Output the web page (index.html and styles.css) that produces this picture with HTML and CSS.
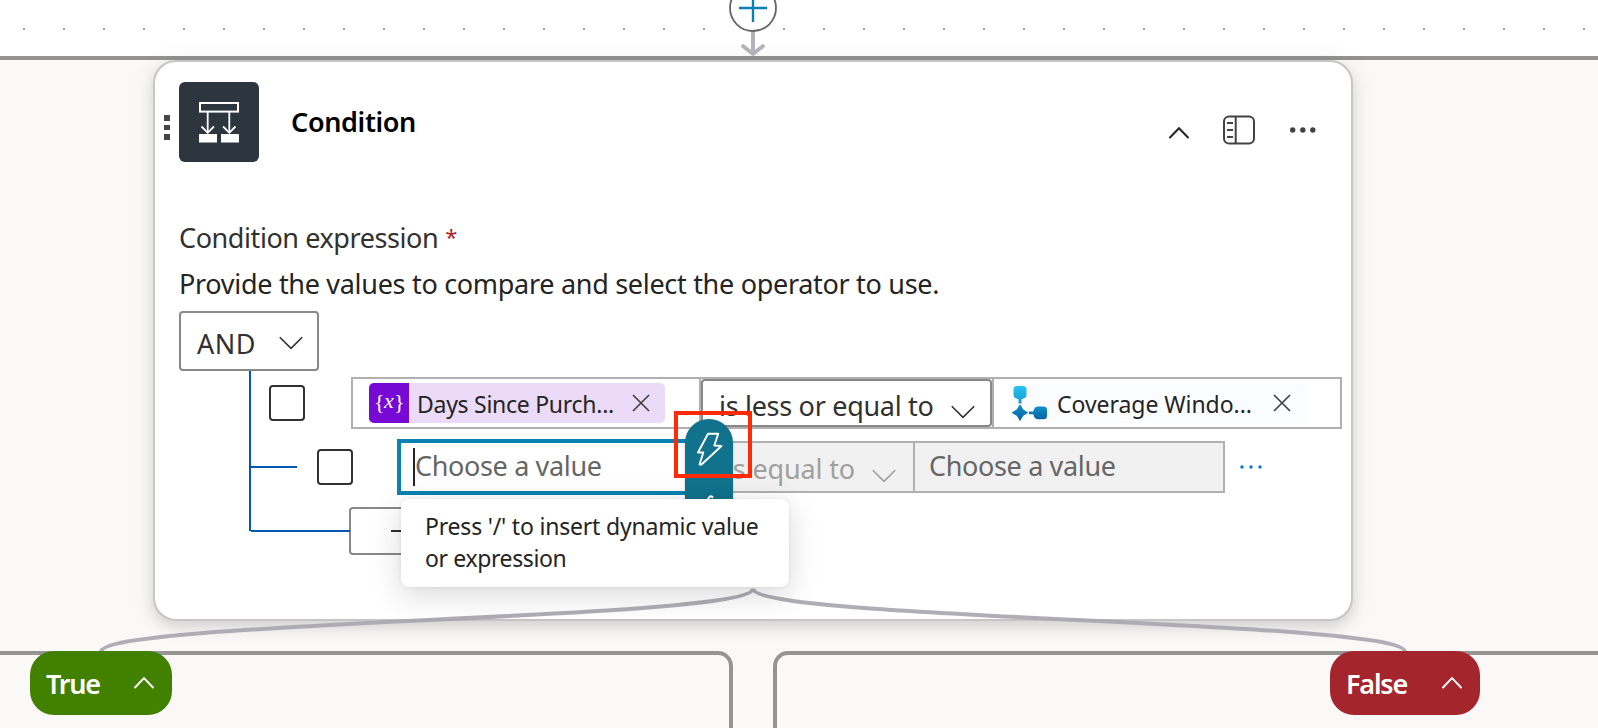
FILE: index.html
```html
<!DOCTYPE html>
<html lang="en">
<head>
<meta charset="utf-8">
<title>Condition</title>
<link rel="stylesheet" href="styles.css">
</head>
<body>
<main class="canvas">
  <section class="scope"></section>
  <section class="branch branch-left"></section>
  <section class="branch branch-right"></section>

  <article class="card">
    <header class="card-header">
      <span class="grip"><i></i><i></i><i></i></span>
      <svg class="op-icon" width="80" height="80" viewBox="0 0 80 80" fill="none" stroke="#fff">
        <rect width="80" height="80" rx="6" fill="#2d353f" stroke="none"/>
        <rect x="21" y="21" width="38" height="8.6" stroke-width="2"/>
        <path d="M28.7 30v21M50.3 30v21" stroke-width="1.8"/>
        <path d="M22.5 44.5l6.2 6.3 6.2-6.3M44.1 44.5l6.2 6.3 6.2-6.3" stroke-width="1.8"/>
        <path d="M20 52h18v8.500H20zM42 52h18v8.500H42z" fill="#fff" stroke="none"/>
      </svg>
      <h1 class="title">Condition</h1>
      <div class="tools">
        <svg width="22" height="14" viewBox="0 0 22 14" fill="none" stroke="#242424" stroke-width="2" stroke-linecap="round"><path d="M2 11.5l9-9.3 9 9.3"/></svg>
        <svg width="32" height="30" viewBox="0 0 32 30" fill="none" stroke="#424242" stroke-width="2"><rect x="1" y="1.5" width="30" height="27" rx="5"/><path d="M12.7 1.5v27M4 8h6M4 15h6M4 22h6"/></svg>
        <svg width="28" height="8" viewBox="0 0 28 8" fill="#424242"><circle cx="3.7" cy="4" r="2.7"/><circle cx="13.8" cy="4" r="2.7"/><circle cx="23.8" cy="4" r="2.7"/></svg>
      </div>
    </header>

    <div class="body">
      <p class="label"><span>Condition expression</span><b class="req">*</b></p>
      <p class="hint">Provide the values to compare and select the operator to use.</p>
      <button class="logic"><span class="t-and">AND</span>
        <svg width="24" height="14" viewBox="0 0 24 14" fill="none" stroke="#323130" stroke-width="1.6"><path d="M.8 1.3L12 12.4 23.2 1.3"/></svg>
      </button>

      <div class="tree">
        <div class="row row-one">
          <span class="check"></span>
          <div class="fields">
            <div class="operand first">
              <span class="token token-var">
                <svg width="40" height="40" viewBox="0 0 40 40"><path d="M5 0h35v40H5a5 5 0 0 1-5-5V5a5 5 0 0 1 5-5z" fill="#7609d4"/><g class="var-glyph"><text x="5" y="25.500">{</text><text x="20" y="25" text-anchor="middle" class="var-x">x</text><text x="25" y="25.500">}</text></g></svg>
                <span class="t-days">Days Since Purch...</span>
                <svg class="x" width="18" height="18" viewBox="0 0 18 18" stroke="#424242" stroke-width="1.7"><path d="M1 1l16 16M17 1L1 17"/></svg>
              </span>
            </div>
            <div class="operator"><span>is less or equal to</span>
              <svg width="24" height="14" viewBox="0 0 24 14" fill="none" stroke="#323130" stroke-width="1.6"><path d="M.8 1.3L12 12.4 23.2 1.3"/></svg>
            </div>
            <div class="operand last">
              <span class="token token-flow">
                <svg width="40" height="40" viewBox="0 0 40 40">
                  <defs>
                    <linearGradient id="g1" x1="0" y1="0" x2="0" y2="1"><stop offset="0" stop-color="#26c3ee"/><stop offset="1" stop-color="#159bd0"/></linearGradient>
                    <linearGradient id="g2" x1="0" y1="0" x2="0" y2="1"><stop offset="0" stop-color="#0f8fc6"/><stop offset="1" stop-color="#0664a4"/></linearGradient>
                  </defs>
                  <path d="M7 3h6q3.500 0 3.500 3.500v5q0 3-3 4l-2 .8V20.500H8.500v-4.200l-2-.8q-3-1-3-4v-5Q3.500 3 7 3z" fill="url(#g1)"/>
                  <path d="M10 22l2.800 4.700L17.500 29.700l-4.700 2.800L10 37.500l-2.800-5L2.300 29.700l4.900-3z" fill="url(#g2)" stroke="#0a78b4" stroke-width="1" stroke-linejoin="round"/>
                  <path d="M19 28.400h4.200l.8-2q1-3 4-3h5.500q3.500 0 3.500 3.500v5.800q0 3.500-3.500 3.500H28q-3 0-4-3l-.8-2H19z" fill="url(#g2)"/>
                </svg>
                <span class="t-cov">Coverage Windo...</span>
                <svg class="x" width="18" height="18" viewBox="0 0 18 18" stroke="#424242" stroke-width="1.7"><path d="M1 1l16 16M17 1L1 17"/></svg>
              </span>
            </div>
          </div>
        </div>

        <div class="row row-two">
          <span class="check"></span>
          <div class="focus"><i class="caret"></i><span>Choose a value</span></div>
          <div class="operator-off"><span>is equal to</span>
            <svg width="24" height="14" viewBox="0 0 24 14" fill="none" stroke="#a19f9d" stroke-width="1.6"><path d="M.8 1.3L12 12.4 23.2 1.3"/></svg>
          </div>
          <div class="value-off">Choose a value</div>
          <svg class="more" width="24" height="6" viewBox="0 0 24 6" fill="#0078d4"><circle cx="3" cy="3" r="1.700"/><circle cx="12" cy="3" r="1.700"/><circle cx="21" cy="3" r="1.700"/></svg>
        </div>

        <button class="add"><i class="dash"></i></button>
        <svg class="lines" width="104" height="162" viewBox="0 0 104 162" fill="none" stroke="#0059b0" stroke-width="2"><path d="M1 0v160M2 96h46M2 160h99"/></svg>
      </div>
    </div>
  </article>

  <div class="insert">
    <svg width="48" height="80" viewBox="0 0 48 80" fill="none" stroke="#fff" stroke-width="1.9" stroke-linejoin="round"><path d="M23 14.700h10.200l-3.900 11.800 7.200.5L16.500 45.500h-2l3.800-12H13z"/><path d="M22.500 82c.8-3.600 2-4.800 3.600-4.800q1.200 0 1.600 1.200" stroke-width="2"/><circle cx="27.300" cy="78.300" r="1" fill="#fff" stroke="none"/></svg>
  </div>
  <div class="tooltip">Press '/' to insert dynamic value<br><span class="tip-end">or expression</span></div>
  <div class="callout"></div>

  <svg class="edges" width="1598" height="728" viewBox="0 0 1598 728" fill="none">
    <path d="M753 588.500C753 620 101 620 101 652M753 588.500C753 620 1405 620 1405 652" stroke="#a8a7b0" stroke-opacity=".92" stroke-width="4"/>
    <path d="M753 31v22M743.200 46.200L753 54l9.800-7.800" stroke="#b3b2ba" stroke-width="4" stroke-linecap="round" stroke-linejoin="round"/>
    <circle cx="753" cy="8" r="23" fill="#fff" stroke="#666" stroke-width="1.800"/>
    <path d="M739 8h28M753-6v28" stroke="#0a82b0" stroke-width="2.400"/>
  </svg>

  <button class="branch-tag yes"><span>True</span>
    <svg width="22" height="14" viewBox="0 0 22 14" fill="none" stroke="#fff" stroke-width="1.900" stroke-linecap="round"><path d="M2 11.500l9-9.300 9 9.300"/></svg>
  </button>
  <button class="branch-tag no"><span>False</span>
    <svg width="22" height="14" viewBox="0 0 22 14" fill="none" stroke="#fff" stroke-width="1.900" stroke-linecap="round"><path d="M2 11.500l9-9.300 9 9.300"/></svg>
  </button>
</main>
</body>
</html>
```
FILE: styles.css
```css
* { box-sizing: border-box; }
body { margin: 0; font-family: "Noto Sans", "Open Sans", sans-serif; color: #323130; }
h1, p { margin: 0; font-weight: 400; }
button { font: inherit; color: inherit; padding: 0; letter-spacing: inherit; }
svg { display: block; flex: none; }

.canvas {
  position: relative;
  width: 1598px;
  height: 728px;
  overflow: hidden;
  background: conic-gradient(from 0deg at 2px 2px, transparent 270deg, #a0a0a0 0) 23px 28px / 40px 40px #fff;
}

/* group frames behind the nodes */
.scope {
  position: absolute;
  left: -20px; top: 56px;
  width: 1638px; height: 700px;
  border: 4px solid #939391;
  background: #faf9f8;
}
.branch {
  position: absolute;
  top: 651px;
  height: 120px;
  border: 4px solid #979593;
  background: #faf9f8;
  z-index: 2;
}
.branch-left { left: -20px; width: 753px; border-radius: 15px; }
.branch-right { left: 773px; width: 900px; border-radius: 15px; }

.card {
  position: absolute;
  left: 153px; top: 60px;
  width: 1200px; height: 561px;
  border: 2px solid #c6c6c6;
  border-radius: 23px;
  background: #fff;
  box-shadow: 0 6px 14px rgba(0,0,0,.13), 0 1px 30px rgba(0,0,0,.06);
}
.card-header { display: flex; padding: 20px 0 0 9px; height: 101px; }
.grip { display: flex; flex-direction: column; gap: 4px; width: 15px; padding-top: 33px; }
.grip i { width: 6px; height: 5.600px; background: #484644; }
.title { padding: 20px 0 0 32px; font-size: 27px; font-weight: 600; line-height: 40px; letter-spacing: -.35px; color: #000; flex: 1; }
.tools { display: flex; align-items: center; padding: 32px 34px 0 0; height: 64px; gap: 33px; }
.tools svg:first-child { margin-top: 6px; }
.tools svg:nth-child(2) { margin-right: 1px; }

.body { padding: 0 0 0 24px; font-size: 27px; letter-spacing: -.3px; }
.label { height: 102px; line-height: 38px; padding-top: 56px; display: flex; letter-spacing: -.42px; }
.req { color: #a4262c; font-weight: 400; font-size: 22px; line-height: 34px; padding-left: 7px; }
.hint { height: 48px; line-height: 38px; color: #242424; }
.logic {
  display: flex; align-items: center; justify-content: space-between;
  width: 140px; height: 60px; margin-top: -2px;
  padding: 4px 14px 0 16px;
  border: 2px solid #8a8886; border-radius: 4px; background: #fff;
}
.t-and { letter-spacing: .5px; }
.tree { position: relative; padding-top: 6px; }
.row { display: flex; align-items: center; }
.check { width: 36px; height: 36px; border: 2px solid #323130; border-radius: 4px; flex: none; }
.row-one { padding-left: 90px; height: 52px; }
.fields { display: flex; margin-left: 46px; width: 991px; height: 52px; border: 2px solid #b0b0b0; }
.operand { display: flex; align-items: center; padding-left: 16px; }
.first { width: 348px; border-right: 2px solid #b0b0b0; }
.last { flex: 1; border-left: 2px solid #b0b0b0; }
.operator {
  display: flex; justify-content: space-between;
  width: 291px; height: 48px;
  border: 2px solid #8a8886; border-radius: 4px;
  padding: 0 15px 0 16px; line-height: 50px;
}
.operator svg { margin-top: 24px; }
.token { display: flex; align-items: center; width: 296px; height: 40px; border-radius: 5px; font-size: 23px; color: #242424; line-height: 40px; }
.token-var { background: #ebdbf8; }
.token-flow { background: #fbfcff; }
.token span { margin-left: 8px; padding-top: 2px; flex: 1; white-space: nowrap; }
.token .t-days { letter-spacing: -.27px; }
.token .t-cov { margin-left: 7px; letter-spacing: -.05px; }
.token .x { margin-right: 15px; margin-bottom: 1px; }
.var-glyph { font: 22px "Liberation Serif", serif; fill: #fff; letter-spacing: 0; }
.var-x { font-style: italic; }

.row-two { margin-top: 10px; height: 56px; padding-left: 138px; letter-spacing: -.35px; }
.focus {
  position: relative;
  display: flex; align-items: center;
  margin-left: 44px;
  width: 304px; height: 56px; border: 4px solid #0a82b0; background: #fff;
  padding: 0 0 3px 12px; color: #666; z-index: 1; line-height: 38px;
}
.caret { width: 2px; height: 38px; background: #242424; margin: 3px 0 0 0; }
.operator-off {
  display: flex; justify-content: space-between;
  width: 214px; height: 52px; background: #f1f1f1; border: 2px solid #b0b0b0; border-left: 0;
  color: #a19f9d; padding: 0 17px 0 25px; line-height: 51px; letter-spacing: -.15px;
}
.operator-off svg { margin-top: 26px; }
.value-off {
  width: 310px; height: 52px; background: #f1f1f1; border: 2px solid #b0b0b0; border-left: 0;
  color: #666; padding-left: 14px; line-height: 45px;
}
.more { margin-left: 14px; }
.add {
  display: flex; align-items: center;
  margin: 12px 0 0 170px; width: 140px; height: 48px;
  border: 2px solid #8a8886; border-radius: 4px; background: #fff; padding-left: 40px;
}
.dash { width: 24px; height: 2px; background: #323130; }
.lines { position: absolute; left: 70px; top: 0; }

.insert {
  position: absolute; left: 685px; top: 419px; width: 48px; height: 90px;
  background: #10728c; border-radius: 24px 24px 0 0; z-index: 3;
  box-shadow: 0 1px 3px rgba(0,0,0,.2);
}
.tooltip {
  position: absolute; left: 401px; top: 499px; width: 388px; height: 88px;
  border-radius: 8px; background: #fff; z-index: 4;
  box-shadow: 0 8px 32px rgba(0,0,0,.15), 0 0 4px rgba(0,0,0,.08);
  padding: 11px 24px; font-size: 23px; line-height: 32px; letter-spacing: -.2px; color: #242424; white-space: nowrap;
}
.tip-end { letter-spacing: -.38px; }
.callout {
  position: absolute; left: 674px; top: 411px; width: 78px; height: 67px;
  border: 4px solid #ff2b06; z-index: 5;
}
.edges { position: absolute; left: 0; top: 0; z-index: 3; }

.branch-tag {
  position: absolute; top: 651px; height: 64px;
  display: flex; align-items: center; justify-content: space-between;
  border: 0; border-radius: 24px; color: #fff; font-size: 27px; font-weight: 600;
  letter-spacing: -1.200px;
  padding: 0 17px 0 16px; z-index: 4;
}
.yes { left: 30px; width: 142px; background: #428000; }
.no { left: 1330px; width: 150px; background: #a4262c; }
```
